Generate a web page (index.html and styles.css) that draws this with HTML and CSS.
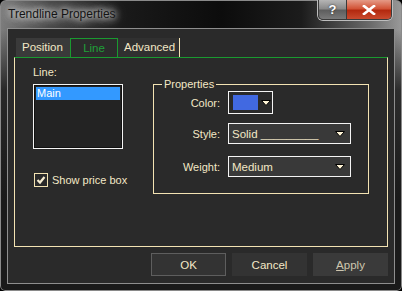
FILE: index.html
```html
<!DOCTYPE html>
<html>
<head>
    <title>Trendline Properties</title>
    <link rel="stylesheet" href="styles.css">
</head>
<body>
    <div class="window">
        <div class="titlebar">
            <span class="title">Trendline Properties</span>
            <div class="caption-btns">
                <span class="cap help">?</span>
                <span class="cap close">
                    <svg width="14" height="10" viewBox="0 0 14 10"><path d="M2 1 L12 9 M12 1 L2 9" stroke="#fff" stroke-width="2.6" stroke-linecap="square"/></svg>
                </span>
            </div>
        </div>
        <div class="client">
            <div class="tabs">
                <span class="tab">Position</span>
                <span class="tab active">Line</span>
                <span class="tab last">Advanced</span>
            </div>
            <div class="panel">
                <div class="left">
                    <div class="label">Line:</div>
                    <div class="listbox">
                        <div class="item selected">Main</div>
                    </div>
                    <label class="check">
                        <span class="box">
                            <svg width="12" height="12" viewBox="0 0 12 12"><path d="M2.5 6 L5 8.5 L9.5 3" fill="none" stroke="#f6ecd0" stroke-width="2.2"/></svg>
                        </span>
                        Show price box
                    </label>
                </div>
                <div class="group">
                    <span class="legend">Properties</span>
                    <div class="row">
                        <span class="row-label">Color:</span>
                        <div class="color-btn">
                            <span class="swatch"></span>
                            <svg class="arrow" width="10" height="6" viewBox="0 0 10 6"><polygon points="0.5,0.5 9.5,0.5 5,5.5" fill="#fff4d6" stroke="#000" stroke-width="1"/></svg>
                        </div>
                    </div>
                    <div class="row style-row">
                        <span class="row-label">Style:</span>
                        <div class="select">
                            <span>Solid _________</span>
                            <svg class="arrow" width="10" height="6" viewBox="0 0 10 6"><polygon points="0.5,0.5 9.5,0.5 5,5.5" fill="#fff4d6" stroke="#000" stroke-width="1"/></svg>
                        </div>
                    </div>
                    <div class="row weight-row">
                        <span class="row-label">Weight:</span>
                        <div class="select">
                            <span>Medium</span>
                            <svg class="arrow" width="10" height="6" viewBox="0 0 10 6"><polygon points="0.5,0.5 9.5,0.5 5,5.5" fill="#fff4d6" stroke="#000" stroke-width="1"/></svg>
                        </div>
                    </div>
                </div>
            </div>
            <div class="buttons">
                <button class="default">OK</button>
                <button>Cancel</button>
                <button class="disabled"><u>A</u>pply</button>
            </div>
        </div>
    </div>
</body>
</html>
```
FILE: styles.css
```css
body {
    margin: 0;
    background: #000;
    font-family: "Liberation Sans", Arial, sans-serif;
    font-size: 11px;
    color: #f3e8c6;
}
.window {
    width: 402px;
    height: 291px;
    box-sizing: border-box;
    border-radius: 6px 6px 5px 5px;
    background:
        linear-gradient(to bottom, rgba(26,26,26,0) 0, rgba(26,26,26,0) 30px, rgba(26,26,26,0.85) 90px, #1a1a1a 200px),
        linear-gradient(to right, #7d7d7d 0, #4a4a4a 12%, #1a1a1a 30%, #0c0c0c 55%, #1c1c1c 75%, #6a6a6a 92%, #9a9a9a 100%);
    box-shadow: inset 0 0 0 1px #8a8a8a;
    display: flex;
    flex-direction: column;
}
.titlebar {
    height: 28px;
    display: flex;
    justify-content: space-between;
    align-items: flex-start;
    padding-left: 8px;
}
.title {
    margin-top: 7px;
    font-size: 12px;
    color: #141414;
    text-shadow: 0 0 6px #fff, 0 0 10px #ddd, 0 0 14px #bbb;
}
.caption-btns {
    display: flex;
    margin-right: 10px;
    border: 1px solid #3a3a3a;
    border-top: none;
    border-radius: 0 0 5px 5px;
    overflow: hidden;
    box-shadow: 0 0 0 1px #bdbdbd;
}
.cap {
    height: 19px;
    display: flex;
    align-items: center;
    justify-content: center;
}
.help {
    width: 27px;
    background: linear-gradient(#b5b5b5, #8a8a8a 45%, #5e5e5e 55%, #7a7a7a);
    color: #fff;
    font-weight: bold;
    font-size: 13px;
    text-shadow: 0 0 2px #222;
    border-right: 1px solid #3a3a3a;
}
.close {
    width: 44px;
    background: linear-gradient(#e59a86, #d25437 45%, #b3290f 55%, #c94a2e);
}
.client {
    margin: 0 7px 7px;
    height: 256px;
    box-sizing: border-box;
    background: #2a2a2a;
    border: 1px solid #8e8e8e;
    padding: 9px 6px 0;
}
.tabs {
    display: flex;
    margin-left: 2px;
    height: 19px;
}
.tab {
    padding: 0 6px;
    line-height: 19px;
    font-size: 11.5px;
    background: #3a3a3a;
    box-sizing: border-box;
}
.tab:first-child {
    width: 54px;
}
.tab.active {
    width: 48px;
    text-align: center;
    color: #1fa038;
    background: #2c2c2c;
    border: 1px solid #1a9a30;
    border-bottom: none;
}
.tab.last {
    width: 62px;
    background: #303030;
    border-right: 1px solid #f3e3b3;
}
.panel {
    height: 190px;
    box-sizing: border-box;
    border: 1px solid #f3e3b3;
    border-top-color: #1a9a30;
    padding: 8px 0 0 18px;
    display: flex;
    gap: 30px;
}
.left {
    width: 90px;
}
.label {
    line-height: 13px;
}
.listbox {
    margin-top: 5px;
    height: 65px;
    box-sizing: border-box;
    border: 1px solid #f4f4f4;
    box-shadow: inset 0 0 0 1px #111;
    padding: 2px;
    background: #232323;
}
.item {
    line-height: 13px;
    padding-left: 1px;
}
.item.selected {
    background: #3399ff;
    color: #fff;
}
.check {
    display: flex;
    align-items: center;
    gap: 4px;
    margin-top: 24px;
    margin-left: 1px;
    white-space: nowrap;
}
.box {
    width: 14px;
    height: 14px;
    flex: none;
    box-sizing: border-box;
    border: 1px solid #f3e3b3;
    display: flex;
    align-items: center;
    justify-content: center;
}
.group {
    margin-top: 18px;
    width: 216px;
    height: 110px;
    box-sizing: border-box;
    border: 1px solid #f3e3b3;
}
.legend {
    display: block;
    width: fit-content;
    margin: -7px 0 0 8px;
    padding: 0 2px;
    line-height: 13px;
    background: #2a2a2a;
}
.row {
    display: flex;
    align-items: center;
    gap: 8px;
}
.row-label {
    width: 66px;
    text-align: right;
}
.style-row {
    margin-top: 9px;
}
.weight-row {
    margin-top: 12px;
}
.color-btn {
    width: 45px;
    height: 23px;
    box-sizing: border-box;
    border: 1px solid #f4f4f4;
    display: flex;
    align-items: center;
    padding-left: 4px;
    gap: 3px;
}
.swatch {
    width: 25px;
    height: 15px;
    background: #4169e1;
}
.select {
    width: 123px;
    height: 21px;
    box-sizing: border-box;
    border: 1px solid #f4f4f4;
    background: #393939;
    display: flex;
    align-items: center;
    justify-content: space-between;
    padding: 0 5px 0 3px;
    font-size: 11.5px;
}
.buttons {
    display: flex;
    justify-content: flex-end;
    gap: 6px;
    margin-top: 6px;
}
button {
    width: 75px;
    height: 23px;
    font-family: inherit;
    font-size: 11.5px;
    color: #f3e8c6;
    background: #333;
    border: 1px solid #333;
    padding: 0;
}
button.default {
    border-color: #5e5e5e;
}
button.disabled {
    background: #3a3a3a;
    border-color: #3a3a3a;
    color: #cfc6ae;
}
```
